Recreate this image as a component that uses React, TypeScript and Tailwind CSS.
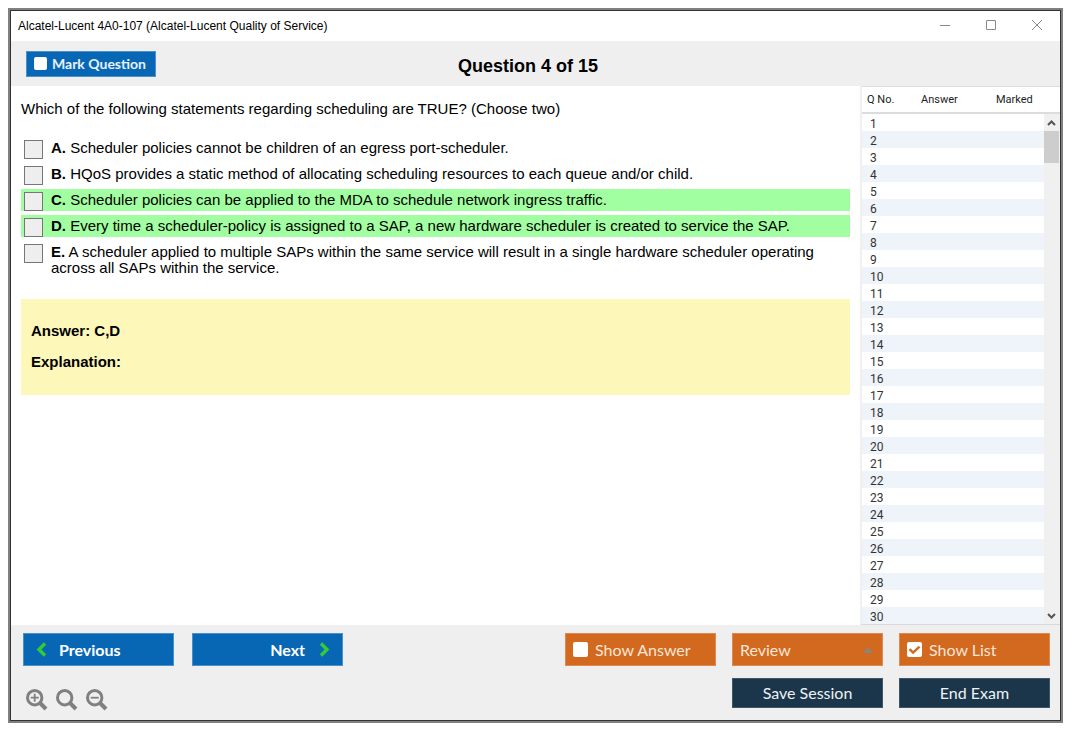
import { clsx } from 'clsx';
import type { ReactNode } from 'react';
import { useState } from 'react';

type Option = {
  letter: string;
  text: string;
  correct?: boolean;
};

const options: Option[] = [
  { letter: 'A', text: 'Scheduler policies cannot be children of an egress port-scheduler.' },
  { letter: 'B', text: 'HQoS provides a static method of allocating scheduling resources to each queue and/or child.' },
  { letter: 'C', text: 'Scheduler policies can be applied to the MDA to schedule network ingress traffic.', correct: true },
  {
    letter: 'D',
    text: 'Every time a scheduler-policy is assigned to a SAP, a new hardware scheduler is created to service the SAP.',
    correct: true,
  },
  {
    letter: 'E',
    text: 'A scheduler applied to multiple SAPs within the same service will result in a single hardware scheduler operating across all SAPs within the service.',
  },
];

const questionNumbers = Array.from({ length: 30 }, (_, index) => index + 1);

function TitleBar() {
  return (
    <div className="flex h-[30px] items-center justify-between bg-white pr-[17px] pl-[7px]">
      <span className="text-[12px] leading-4">Alcatel-Lucent 4A0-107 (Alcatel-Lucent Quality of Service)</span>
      <div className="flex items-center gap-[34px] pb-[2px] text-[#8a8a8a]">
        <button type="button" aria-label="Minimize">
          <svg width="12" height="12" viewBox="0 0 12 12" stroke="currentColor" fill="none">
            <path d="M1 6.5h10" />
          </svg>
        </button>
        <button type="button" aria-label="Maximize">
          <svg width="12" height="12" viewBox="0 0 12 12" stroke="currentColor" fill="none">
            <path d="M1.5 1.5h9v9h-9z" />
          </svg>
        </button>
        <button type="button" aria-label="Close">
          <svg width="12" height="12" viewBox="0 0 12 12" stroke="currentColor" fill="none">
            <path d="M1 1l10 10M11 1L1 11" />
          </svg>
        </button>
      </div>
    </div>
  );
}

type ToggleProps = {
  label: string;
  checked: boolean;
  onChange: (checked: boolean) => void;
  className: string;
  boxClassName: string;
};

function Toggle({ label, checked, onChange, className, boxClassName }: ToggleProps) {
  return (
    <label className={clsx('flex cursor-pointer items-center border', className)}>
      <span className="grid shrink-0">
        <input
          type="checkbox"
          checked={checked}
          onChange={(event) => onChange(event.target.checked)}
          className={clsx('col-start-1 row-start-1 appearance-none rounded-xs bg-white', boxClassName)}
        />
        {checked && (
          <svg
            width="15"
            height="15"
            viewBox="0 0 15 15"
            fill="none"
            stroke="#d2691e"
            strokeWidth="2.4"
            className="pointer-events-none col-start-1 row-start-1"
            aria-hidden="true"
          >
            <path d="M2.5 7.2l3.6 3.5L12.5 4.6" />
          </svg>
        )}
      </span>
      <span>{label}</span>
    </label>
  );
}

function ZoomButton({ label, children }: { label: string; children?: ReactNode }) {
  return (
    <button type="button" aria-label={label} className="text-[#808080]">
      <svg width="22" height="22" viewBox="0 0 22 22" fill="none" stroke="currentColor">
        <circle cx="8.7" cy="8.7" r="7.2" strokeWidth="3" />
        <path d="M14 14l6 6" strokeWidth="4" />
        {children}
      </svg>
    </button>
  );
}

function QuestionList() {
  return (
    <aside className="flex w-[200px] shrink-0 self-start border-b border-l-2 border-b-[#d9d9d9] border-l-[#f0f0f0]">
      <table className="flex-1 table-fixed border-separate border-spacing-0 text-left font-['Roboto',sans-serif] text-[12px] text-[#333333]">
        <thead className="text-[11px] text-[#222222]">
          <tr>
            <th className="h-[28px] w-[59px] border-t border-b-2 border-[#dcdcdc] p-0 pt-[2px] pl-[5px] font-normal">
              Q No.
            </th>
            <th className="w-[75px] border-t border-b-2 border-[#dcdcdc] p-0 pt-[2px] font-normal">Answer</th>
            <th className="border-t border-b-2 border-[#dcdcdc] p-0 pt-[2px] font-normal">Marked</th>
          </tr>
        </thead>
        <tbody>
          {questionNumbers.map((number) => (
            <tr key={number} className="h-[17px] leading-[14px] even:bg-[#eef4f9]">
              <td className="p-0 pt-[3px] pl-2">{number}</td>
              <td className="p-0" />
              <td className="p-0" />
            </tr>
          ))}
        </tbody>
      </table>
      <div className="flex w-[16px] flex-col" aria-hidden="true">
        <div className="h-[28px] border-t border-b-2 border-[#dcdcdc]" />
        <div className="flex flex-1 flex-col bg-[#f0f0f0] pr-px text-[#555555]">
          <div className="flex h-[17px] items-center justify-center">
            <svg width="9" height="6" viewBox="0 0 9 6" fill="none" stroke="currentColor" strokeWidth="2">
              <path d="M1 5l3.5-3.5L8 5" />
            </svg>
          </div>
          <div className="h-8 bg-[#cdcdcd]" />
          <div className="mt-auto flex h-[17px] items-center justify-center">
            <svg width="9" height="6" viewBox="0 0 9 6" fill="none" stroke="currentColor" strokeWidth="2">
              <path d="M1 1l3.5 3.5L8 1" />
            </svg>
          </div>
        </div>
      </div>
    </aside>
  );
}

export default function App() {
  const [isMarked, setIsMarked] = useState(false);
  const [showAnswer, setShowAnswer] = useState(false);
  const [showList, setShowList] = useState(true);

  return (
    <div className="flex min-h-screen bg-white pt-2 pr-3 pb-3 pl-2 font-['Liberation_Sans',Arial,sans-serif] text-black">
      <div className="flex flex-1 border-2 border-[#808080]">
        <div className="flex flex-1 flex-col border border-[#333333]">
          <TitleBar />

          <header className="grid h-[45px] grid-cols-[1fr_auto_1fr] items-center bg-[#efefef] pr-[30px] pl-[15px]">
            <Toggle
              label="Mark Question"
              checked={isMarked}
              onChange={setIsMarked}
              className="h-[26px] w-[130px] gap-[5px] border-[#4a90cc] bg-[#0867b5] pl-[7px] font-['Lato',sans-serif] text-[14px] font-bold text-[#e8f2fb]"
              boxClassName="h-[13px] w-[13px]"
            />
            <h1 className="pt-1 text-[18px] leading-5 font-bold">Question 4 of 15</h1>
          </header>

          <main className="flex flex-1 bg-white">
            <section className="min-w-0 flex-1 px-[10px] pt-[15px] text-[15px] leading-4">
              <p>Which of the following statements regarding scheduling are TRUE? (Choose two)</p>

              <div className="mt-5 flex flex-col gap-1">
                {options.map((option) => (
                  <label
                    key={option.letter}
                    className={clsx('flex items-start gap-2 py-[3px] pl-[3px]', option.correct && 'bg-[#a1ffa1]')}
                  >
                    <input
                      type="checkbox"
                      className="-mb-[3px] h-[19px] w-[19px] shrink-0 appearance-none border border-[#767676] bg-[#eeeeee] checked:bg-[#767676]"
                    />
                    <span>
                      <b>{option.letter}.</b> {option.text}
                    </span>
                  </label>
                ))}
              </div>

              <div className="mt-5 flex flex-col gap-[15px] bg-[#fdf7b9] px-[10px] pt-6 pb-[25px] font-bold">
                <p>Answer: C,D</p>
                <p>Explanation:</p>
              </div>
            </section>

            {showList && <QuestionList />}
          </main>

          <footer className="flex justify-between bg-[#efefef] pt-2 pr-[10px] pb-[9px] pl-3 font-['Lato',sans-serif] text-[16px]">
            <div className="flex flex-col justify-between">
              <div className="flex gap-[18px] font-bold text-white">
                <button
                  type="button"
                  className="flex h-[33px] w-[151px] items-center gap-3 border border-[#4a90cc] bg-[#0867b5] pl-3"
                >
                  <svg width="11" height="15" viewBox="0 0 11 15" fill="none" stroke="#32cd32" strokeWidth="3.4">
                    <path d="M9 1.5L3 7.5l6 6" />
                  </svg>
                  Previous
                </button>
                <button
                  type="button"
                  className="flex h-[33px] w-[151px] items-center justify-end gap-[14px] border border-[#4a90cc] bg-[#0867b5] pr-3"
                >
                  Next
                  <svg width="11" height="15" viewBox="0 0 11 15" fill="none" stroke="#32cd32" strokeWidth="3.4">
                    <path d="M2 1.5l6 6-6 6" />
                  </svg>
                </button>
              </div>
              <div className="flex gap-2 pl-[3px]">
                <ZoomButton label="Zoom in">
                  <path d="M4.7 8.7h8M8.7 4.7v8" strokeWidth="1.8" />
                </ZoomButton>
                <ZoomButton label="Reset zoom" />
                <ZoomButton label="Zoom out">
                  <path d="M4.7 8.7h8" strokeWidth="1.8" />
                </ZoomButton>
              </div>
            </div>

            <div className="grid grid-cols-[151px_151px_151px] gap-x-4 gap-y-3 pb-[3px] text-[#f9e6d8]">
              <Toggle
                label="Show Answer"
                checked={showAnswer}
                onChange={setShowAnswer}
                className="h-[33px] gap-[7px] border-[#dd8a50] bg-[#d2691e] pl-[7px]"
                boxClassName="h-[15px] w-[15px]"
              />
              <button
                type="button"
                className="flex h-[33px] items-center justify-between border border-[#dd8a50] bg-[#d2691e] pr-[9px] pl-[7px]"
              >
                Review
                <svg width="10" height="6" viewBox="0 0 10 6" fill="#8c8478" aria-hidden="true">
                  <path d="M5 0l5 6H0z" />
                </svg>
              </button>
              <Toggle
                label="Show List"
                checked={showList}
                onChange={setShowList}
                className="h-[33px] gap-[7px] border-[#dd8a50] bg-[#d2691e] pl-[7px]"
                boxClassName="h-[15px] w-[15px]"
              />
              <button
                type="button"
                className="col-start-2 h-[30px] border border-[#3d566a] bg-[#1b354a] text-[#eef2f5]"
              >
                Save Session
              </button>
              <button type="button" className="h-[30px] border border-[#3d566a] bg-[#1b354a] text-[#eef2f5]">
                End Exam
              </button>
            </div>
          </footer>
        </div>
      </div>
    </div>
  );
}
